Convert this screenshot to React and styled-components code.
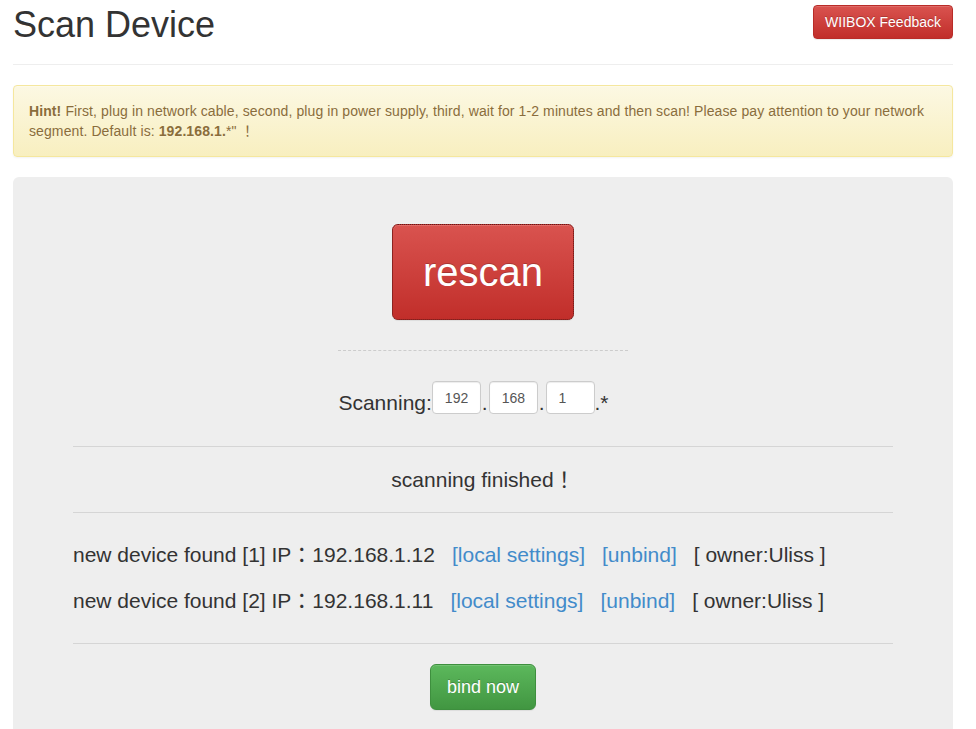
import React from "react";
import styled, { createGlobalStyle } from "styled-components";

const Global = createGlobalStyle`
  html, body { margin: 0; padding: 0; background: #fff; }
  body {
    font-family: "Liberation Sans", Arial, "Noto Sans CJK JP", sans-serif;
    font-size: 14px;
    line-height: 1.428571429;
    color: #333;
  }
  * { box-sizing: border-box; }
`;

const Container = styled.div`
  width: 940px;
  margin-left: 13px;
`;

const PageHeader = styled.div`
  display: flex;
  justify-content: space-between;
  align-items: flex-start;
  padding: 5px 0 19px;
  border-bottom: 1px solid #eee;
  margin-bottom: 20px;
`;

const Title = styled.h1`
  margin: 0;
  font-size: 36px;
  font-weight: 500;
  line-height: 40px;
  color: #333;
`;

const Btn = styled.button`
  display: inline-block;
  font-family: "Liberation Sans", Arial, sans-serif;
  color: #fff;
  cursor: pointer;
  text-shadow: 0 -1px 0 rgba(0, 0, 0, 0.2);
  box-shadow: inset 0 1px 0 rgba(255, 255, 255, 0.15), 0 1px 1px rgba(0, 0, 0, 0.075);
  background-image: ${(p) =>
    p.$variant === "success"
      ? "linear-gradient(to bottom, #5cb85c 0%, #419641 100%)"
      : "linear-gradient(to bottom, #d9534f 0%, #c12e2a 100%)"};
  border: 1px solid ${(p) => (p.$variant === "success" ? "#3e8f3e" : "#b92c28")};
  font-size: ${(p) => p.$size === "xl" ? "40px" : p.$size === "lg" ? "18px" : "14px"};
  line-height: ${(p) => p.$size === "xl" ? "94px" : p.$size === "lg" ? "24px" : "20px"};
  padding: ${(p) => p.$size === "xl" ? "0 30px" : p.$size === "lg" ? "10px 16px" : "6px 11px"};
  border-radius: ${(p) => (p.$size === "sm" ? "4px" : "6px")};
  ${(p) => p.$focused && `outline: 1px dotted rgba(60, 20, 20, 0.7); outline-offset: -1px;`}
`;

const Alert = styled.div`
  padding: 15px;
  margin-bottom: 20px;
  border: 1px solid #f5e79e;
  border-radius: 4px;
  color: #8a6d3b;
  letter-spacing: 0.1px;
  background-image: linear-gradient(to bottom, #fcf8e3 0%, #f8efc0 100%);
  box-shadow: inset 0 1px 0 rgba(255, 255, 255, 0.25), 0 1px 2px rgba(0, 0, 0, 0.05);
  text-shadow: 0 1px 0 rgba(255, 255, 255, 0.2);
  strong { font-weight: bold; }
`;

const Jumbotron = styled.div`
  background: #eee;
  border-radius: 6px;
  padding: 47px 60px 48px;
  font-size: 21px;
  color: #333;
`;

const Center = styled.div`
  text-align: center;
  line-height: 0;
`;

const DashedRule = styled.div`
  width: 290px;
  margin: 30px auto 0;
  border-top: 1px dashed #ccc;
`;

const ScanRow = styled.div`
  display: flex;
  justify-content: center;
  align-items: flex-end;
  margin-top: 30px;
  padding-right: 19px;
  height: 33px;
`;

const RowText = styled.span`
  line-height: 22px;
  padding: ${(p) => (p.$dot ? "0 1px" : "0")};
`;

const IpInput = styled.input`
  width: 49px;
  height: 33px;
  padding: 0 12px;
  font-family: "Liberation Sans", Arial, sans-serif;
  font-size: 14px;
  color: #555;
  background: #fff;
  border: 1px solid #ccc;
  border-radius: 4px;
  box-shadow: inset 0 1px 1px rgba(0, 0, 0, 0.075);
  outline: none;
`;

const Rule = styled.hr`
  margin: ${(p) => p.$mt}px 0 0;
  border: 0;
  border-top: 1px solid #d5d5d5;
  height: 0;
`;

const Status = styled.p`
  margin: 22px 0 0;
  text-align: center;
  line-height: 22px;
`;

const DeviceList = styled.div`
  margin-top: 19px;
`;

const DeviceLine = styled.div`
  line-height: 46px;
  white-space: nowrap;
`;

const Link = styled.a`
  color: #428bca;
  text-decoration: none;
  margin-left: 17px;
  cursor: pointer;
`;

const Owner = styled.span`
  margin-left: 17px;
`;

const BindWrap = styled.div`
  text-align: center;
  margin-top: 20px;
`;

const devices = [
  { n: 1, ip: "192.168.1.12", owner: "Uliss" },
  { n: 2, ip: "192.168.1.11", owner: "Uliss" },
];

export default function App() {
  return (
    <>
      <Global />
      <Container>
        <PageHeader>
          <Title>Scan Device</Title>
          <Btn $size="sm">WIIBOX Feedback</Btn>
        </PageHeader>
        <Alert>
          <strong>Hint!</strong> First, plug in network cable, second, plug in power supply, third, wait for 1-2 minutes and then scan! Please pay attention to your network segment. Default is: <strong>192.168.1.</strong>*" ！
        </Alert>
        <Jumbotron>
          <Center>
            <Btn $size="xl" $focused>rescan</Btn>
          </Center>
          <DashedRule />
          <ScanRow>
            <RowText>Scanning:</RowText>
            <IpInput defaultValue="192" />
            <RowText $dot>.</RowText>
            <IpInput defaultValue="168" />
            <RowText $dot>.</RowText>
            <IpInput defaultValue="1" />
            <RowText>.*</RowText>
          </ScanRow>
          <Rule $mt={32} />
          <Status>scanning finished！</Status>
          <Rule $mt={21} />
          <DeviceList>
            {devices.map((d) => (
              <DeviceLine key={d.n}>
                new device found [{d.n}] IP：{d.ip}
                <Link>[local settings]</Link>
                <Link>[unbind]</Link>
                <Owner>[ owner:{d.owner} ]</Owner>
              </DeviceLine>
            ))}
          </DeviceList>
          <Rule $mt={19} />
          <BindWrap>
            <Btn $size="lg" $variant="success">bind now</Btn>
          </BindWrap>
        </Jumbotron>
      </Container>
    </>
  );
}
